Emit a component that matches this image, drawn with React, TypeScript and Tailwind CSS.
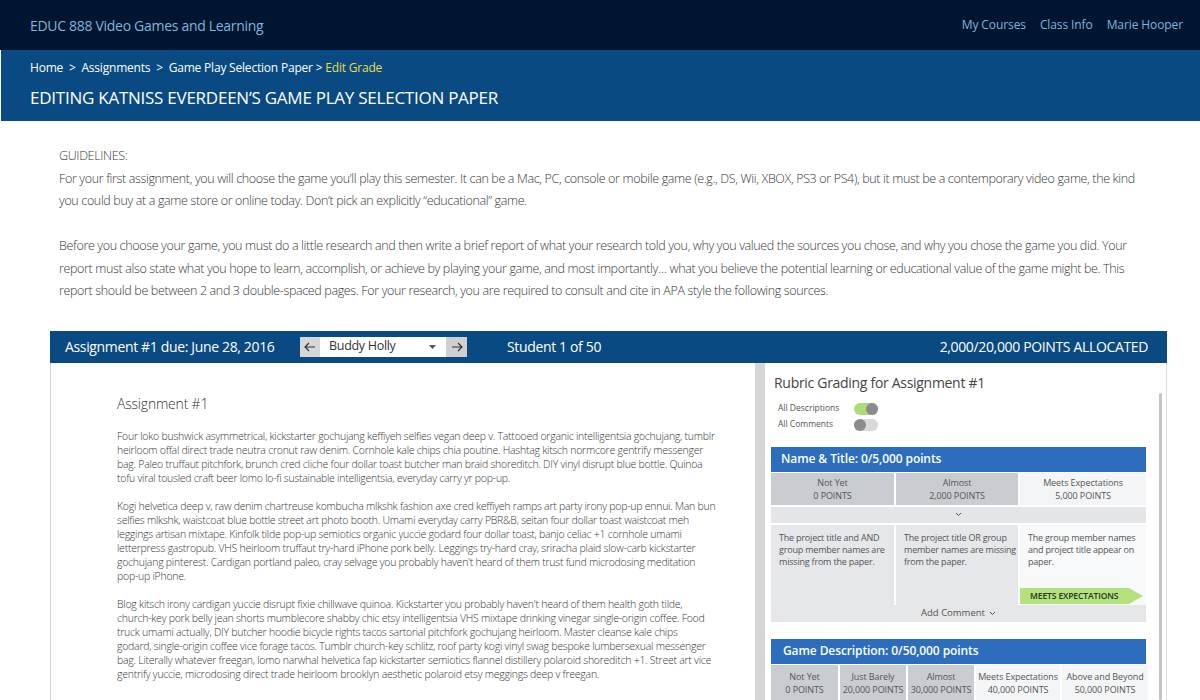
import React from "react";

const P1 = [
  "Four loko bushwick asymmetrical, kickstarter gochujang keffiyeh selfies vegan deep v. Tattooed organic intelligentsia gochujang, tumblr",
  "heirloom offal direct trade neutra cronut raw denim. Cornhole kale chips chia poutine. Hashtag kitsch normcore gentrify messenger",
  "bag. Paleo truffaut pitchfork, brunch cred cliche four dollar toast butcher man braid shoreditch. DIY vinyl disrupt blue bottle. Quinoa",
  "tofu viral tousled craft beer lomo lo-fi sustainable intelligentsia, everyday carry yr pop-up.",
];
const P2 = [
  "Kogi helvetica deep v, raw denim chartreuse kombucha mlkshk fashion axe cred keffiyeh ramps art party irony pop-up ennui. Man bun",
  "selfies mlkshk, waistcoat blue bottle street art photo booth. Umami everyday carry PBR&B, seitan four dollar toast waistcoat meh",
  "leggings artisan mixtape. Kinfolk tilde pop-up semiotics organic yuccie godard four dollar toast, banjo celiac +1 cornhole umami",
  "letterpress gastropub. VHS heirloom truffaut try-hard iPhone pork belly. Leggings try-hard cray, sriracha plaid slow-carb kickstarter",
  "gochujang pinterest. Cardigan portland paleo, cray selvage you probably haven't heard of them trust fund microdosing meditation",
  "pop-up iPhone.",
];
const P3 = [
  "Blog kitsch irony cardigan yuccie disrupt fixie chillwave quinoa. Kickstarter you probably haven't heard of them health goth tilde,",
  "church-key pork belly jean shorts mumblecore shabby chic etsy intelligentsia VHS mixtape drinking vinegar single-origin coffee. Food",
  "truck umami actually, DIY butcher hoodie bicycle rights tacos sartorial pitchfork gochujang heirloom. Master cleanse kale chips",
  "godard, single-origin coffee vice forage tacos. Tumblr church-key schlitz, roof party kogi vinyl swag bespoke lumbersexual messenger",
  "bag. Literally whatever freegan, lomo narwhal helvetica fap kickstarter semiotics flannel distillery polaroid shoreditch +1. Street art vice",
  "gentrify yuccie, microdosing direct trade heirloom brooklyn aesthetic polaroid etsy meggings deep v freegan.",
];

const G1 = [
  "For your first assignment, you will choose the game you\u2019ll play this semester. It can be a Mac, PC, console or mobile game (e.g., DS, Wii, XBOX, PS3 or PS4), but it must be a contemporary video game, the kind",
  "you could buy at a game store or online today. Don\u2019t pick an explicitly \u201ceducational\u201d game.",
];
const G2 = [
  "Before you choose your game, you must do a little research and then write a brief report of what your research told you, why you valued the sources you chose, and why you chose the game you did. Your",
  "report must also state what you hope to learn, accomplish, or achieve by playing your game, and most importantly\u2026 what you believe the potential learning or educational value of the game might be. This",
  "report should be between 2 and 3 double-spaced pages. For your research, you are required to consult and cite in APA style the following sources.",
];

function Lines({ lines }: { lines: string[] }) {
  return (
    <div>
      {lines.map((l, i) => (
        <div key={i} className="whitespace-nowrap">
          {l}
        </div>
      ))}
    </div>
  );
}

function Toggle({ on }: { on: boolean }) {
  return (
    <div
      className={
        "relative w-[24px] h-[12px] rounded-full " +
        (on ? "bg-[#a9dc7a]" : "bg-[#d9d9d9]")
      }
    >
      <div
        className={
          "absolute top-0 w-[12px] h-[12px] rounded-full bg-[#8c8c8c] " +
          (on ? "right-0" : "left-0")
        }
      />
    </div>
  );
}

function Chevron() {
  return (
    <svg width="7" height="5" viewBox="0 0 7 5" className="inline-block">
      <path d="M1 1 L3.5 3.5 L6 1" fill="none" stroke="#555" strokeWidth="1" />
    </svg>
  );
}

function LevelCell({
  name,
  pts,
  light,
}: {
  name: string;
  pts: string;
  light?: boolean;
}) {
  return (
    <div
      className={
        "flex flex-col items-center justify-center text-[9px] leading-[13px] text-[#555] whitespace-nowrap tracking-[-0.1px] " +
        (light ? "bg-[#f4f5f7]" : "bg-[#c9ccd1]")
      }
    >
      <div>{name}</div>
      <div>{pts}</div>
    </div>
  );
}

export default function App() {
  return (
    <div
      className="w-[1200px] h-[700px] overflow-hidden bg-white"
      style={{ fontFamily: "'Open Sans', sans-serif" }}
    >
      {/* Top bar */}
      <div className="h-[50px] bg-[#00152f] flex items-center justify-between pl-[30px] pr-[17px] text-[#7fb5de]">
        <div className="text-[14px] tracking-[-0.3px]">EDUC 888 Video Games and Learning</div>
        <div className="flex gap-[14px] text-[12px] tracking-[-0.1px]">
          <span>My Courses</span>
          <span>Class Info</span>
          <span>Marie Hooper</span>
        </div>
      </div>

      {/* Blue band */}
      <div className="ml-px h-[71px] bg-[#0a4a82] pl-[29px] pt-[9px] text-white">
        <div className="text-[12px] leading-[18px] tracking-[-0.2px]">
          Home&nbsp;&nbsp;&gt;&nbsp;&nbsp;Assignments&nbsp;&nbsp;&gt;&nbsp;&nbsp;Game Play Selection Paper &gt;{" "}
          <span className="text-[#e6df4a]">Edit Grade</span>
        </div>
        <div className="mt-[10px] text-[17px] leading-[22px] tracking-[-0.25px]">
          {"EDITING KATNISS EVERDEEN\u2019S GAME PLAY SELECTION PAPER"}
        </div>
      </div>

      {/* Guidelines */}
      <div className="pl-[59px] pt-[24px] text-[12.5px] leading-[22.5px] text-[#383838] font-light tracking-[-0.35px]">
        <div>GUIDELINES:</div>
        <Lines lines={G1} />
        <div className="mt-[22.5px]">
          <Lines lines={G2} />
        </div>
      </div>

      {/* Panel */}
      <div className="ml-[50px] w-[1117px] mt-[28px]">
        <div className="h-[32px] bg-[#0a4a82] flex items-center text-white text-[14px] tracking-[-0.35px] pl-[15px] pr-[19px]">
          <div className="w-[235px]">Assignment #1 due: June 28, 2016</div>
          <div className="flex h-[20px] items-stretch tracking-normal">
            <div className="w-[20px] bg-[#d7d7d7] flex items-center justify-center text-[#333]">
              <svg width="12" height="10" viewBox="0 0 12 10">
                <path d="M11 5 H1.5 M5 1 L1 5 L5 9" fill="none" stroke="#333" strokeWidth="1.2" />
              </svg>
            </div>
            <div className="w-[126px] bg-white flex items-center justify-between pl-[9px] pr-[10px] text-[#333] text-[12.5px] tracking-[-0.3px]">
              <span>Buddy Holly</span>
              <svg width="7" height="4" viewBox="0 0 7 4">
                <path d="M0 0 H7 L3.5 4 Z" fill="#555" />
              </svg>
            </div>
            <div className="w-[21px] bg-[#d0d0d0] flex items-center justify-center">
              <svg width="12" height="10" viewBox="0 0 12 10">
                <path d="M1 5 H10.5 M7 1 L11 5 L7 9" fill="none" stroke="#333" strokeWidth="1.2" />
              </svg>
            </div>
          </div>
          <div className="ml-[40px]">Student 1 of 50</div>
          <div className="ml-auto">2,000/20,000 POINTS ALLOCATED</div>
        </div>

        <div className="flex h-[337px]">
          {/* Left content */}
          <div className="w-[705px] border-l border-[#d4d4d4] pl-[66px] pt-[31px] text-[#383838]">
            <div className="text-[14px] leading-[19px] tracking-[-0.2px] font-light text-[#333]">Assignment #1</div>
            <div className="mt-[16px] text-[10.5px] leading-[14px] tracking-[-0.25px] font-light flex flex-col gap-[14px]">
              <Lines lines={P1} />
              <Lines lines={P2} />
              <Lines lines={P3} />
            </div>
          </div>

          {/* Divider */}
          <div className="w-[10px] bg-[#d6d6d6]" />

          {/* Right rubric panel */}
          <div className="relative w-[402px] border-r border-[#dcdcdc] pl-[6px] pt-[11px]">
            <div className="pl-[3px] text-[14px] leading-[18px] tracking-[-0.3px] text-[#444]">
              Rubric Grading for Assignment #1
            </div>
            <div className="pl-[7px] mt-[11px] flex flex-col gap-[4px] text-[8.5px] text-[#555]">
              <div className="flex items-center h-[12px]">
                <span className="w-[76px]">All Descriptions</span>
                <Toggle on />
              </div>
              <div className="flex items-center h-[12px]">
                <span className="w-[76px]">All Comments</span>
                <Toggle on={false} />
              </div>
            </div>

            {/* Block 1 */}
            <div className="mt-[16px] w-[375px]">
              <div className="h-[25px] bg-[#2c6dbd] text-white text-[12px] tracking-[-0.1px] font-semibold flex items-center pl-[10px]">
                Name &amp; Title: 0/5,000 points
              </div>
              <div className="grid grid-cols-[123px_122px_126px] gap-x-[2px] h-[32px] mt-px">
                <LevelCell name="Not Yet" pts="0 POINTS" />
                <LevelCell name="Almost" pts="2,000 POINTS" />
                <LevelCell name="Meets Expectations" pts="5,000 POINTS" light />
              </div>
              <div className="mt-[2px] h-[16px] bg-[#e4e5e8] flex items-center justify-center">
                <Chevron />
              </div>
              <div className="grid grid-cols-[123px_122px_126px] gap-x-[2px] h-[80px] mt-[2px] text-[9px] leading-[12px] tracking-[-0.2px] text-[#555] whitespace-nowrap">
                <div className="bg-[#e6e7ea] pl-[8px] pt-[7px]">
                  The project title and AND
                  <br />
                  group member names are
                  <br />
                  missing from the paper.
                </div>
                <div className="bg-[#e6e7ea] pl-[8px] pt-[7px]">
                  The project title OR group
                  <br />
                  member names are missing
                  <br />
                  from the paper.
                </div>
                <div className="bg-[#f8f9fa] pl-[8px] pt-[7px] flex flex-col">
                  <div>
                    The group member names
                    <br />
                    and project title appear on
                    <br />
                    paper.
                  </div>
                  <div className="mt-auto mb-px -ml-[8px] mr-[3px] flex items-center">
                    <div className="h-[16px] flex-1 bg-[#b3e27c] flex items-center pl-[10px] text-[8.5px] tracking-[-0.1px] font-semibold text-[#23351c] whitespace-nowrap">
                      MEETS EXPECTATIONS
                    </div>
                    <div className="w-0 h-0 border-y-[8px] border-y-transparent border-l-[14px] border-l-[#b3e27c]" />
                  </div>
                </div>
              </div>
              <div className="h-[17px] bg-[#e5e6e8] flex items-center justify-center gap-[4px] text-[9.5px] text-[#555]">
                <span>Add Comment</span>
                <Chevron />
              </div>
            </div>

            {/* Block 2 */}
            <div className="mt-[17px] w-[375px]">
              <div className="h-[25px] bg-[#2c6dbd] text-white text-[12px] tracking-[-0.1px] font-semibold flex items-center pl-[12px]">
                Game Description: 0/50,000 points
              </div>
              <div className="grid grid-cols-[67px_66px_66px_84px_86px] gap-x-[2px] h-[36px] mt-px">
                <LevelCell name="Not Yet" pts="0 POINTS" />
                <LevelCell name="Just Barely" pts="20,000 POINTS" />
                <LevelCell name="Almost" pts="30,000 POINTS" />
                <LevelCell name="Meets Expectations" pts="40,000 POINTS" light />
                <LevelCell name="Above and Beyond" pts="50,000 POINTS" light />
              </div>
            </div>

            {/* Scrollbar */}
            <div className="absolute right-[4px] top-[30px] bottom-0 w-[3px] rounded-full bg-[#c4c4c4]" />
          </div>
        </div>
      </div>
    </div>
  );
}
